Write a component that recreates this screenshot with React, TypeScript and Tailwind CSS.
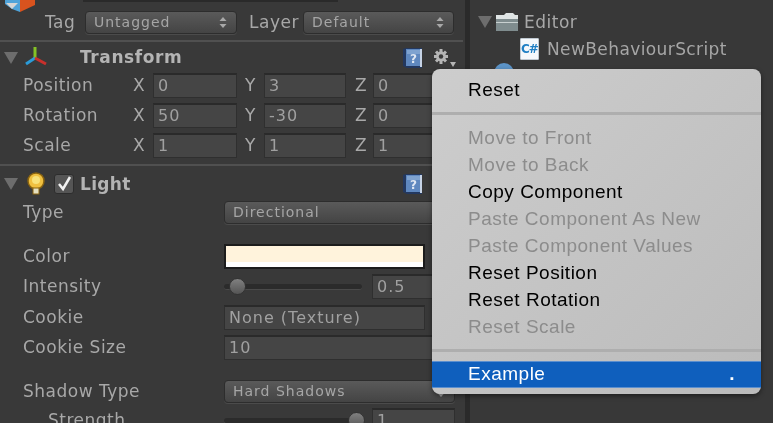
import React from "react";

const label = "text-[#a8a8a8] text-[17px] leading-none tracking-[0.5px]";

function Field({ w, children, className = "" }: { w: string; children?: React.ReactNode; className?: string }) {
  return (
    <div className={`${w} h-[25px] shrink-0 bg-[#454545] border border-[#2f2f2f] border-t-2 border-t-[#2a2a2a] border-b-[#2f2f2f] flex items-center pl-[4px] text-[#a0a0a0] text-[16px] tracking-[1px] ${className}`}>
      {children}
    </div>
  );
}

function Arrows() {
  return (
    <svg width="8" height="13" viewBox="0 0 8 13" className="shrink-0">
      <path d="M4 1 L7.5 5 H0.5 Z M4 12 L7.5 8 H0.5 Z" fill="#a8a8a8" />
    </svg>
  );
}

function Drop({ w, text, className = "" }: { w: string; text: string; className?: string }) {
  return (
    <div className={`${w} h-[23px] shrink-0 rounded-[4px] bg-gradient-to-b from-[#5a5a5a] to-[#444444] border border-[#2d2d2d] shadow-[0_1px_0_#4b4b4b] flex items-center justify-between pl-[8px] pr-[9px] text-[#a6a6a6] text-[14px] tracking-[1px] ${className}`}>
      <span>{text}</span>
      <Arrows />
    </div>
  );
}

function Tri() {
  return (
    <svg width="16" height="14" viewBox="0 0 16 14" className="shrink-0">
      <path d="M1 1 H15 L8 13 Z" fill="#6d6d6d" />
    </svg>
  );
}

function HelpBook() {
  return (
    <svg width="22" height="22" viewBox="0 0 22 22" className="shrink-0">
      <path d="M1 2 L4 1 H20 V21 H5 L1 19 Z" fill="#23385f" />
      <rect x="4" y="2" width="15" height="17" fill="#5f88bf" />
      <rect x="5" y="3" width="13" height="4" fill="#7fa3d0" />
      <rect x="18" y="2" width="2" height="18" fill="#c6d3e6" />
      <text x="11.5" y="15.5" textAnchor="middle" fontSize="12" fontWeight="700" fontFamily="'DejaVu Sans', sans-serif" fill="#dfe7f2">?</text>
    </svg>
  );
}

function Gear() {
  return (
    <svg width="24" height="20" viewBox="0 0 24 20" className="shrink-0">
      <g stroke="#b5b5b5" strokeWidth="3">
        <path d="M9 1 V16 M2 8.5 H16 M4 3.5 L14 13.5 M14 3.5 L4 13.5" />
      </g>
      <circle cx="9" cy="8.5" r="5" fill="#b5b5b5" />
      <circle cx="9" cy="8.5" r="2.2" fill="#3a3a3a" />
      <path d="M18 14 H24 L21 19 Z" fill="#b5b5b5" />
    </svg>
  );
}

function XYZ({ mt, x, y, z, name }: { mt: string; x: string; y: string; z: string; name: string }) {
  return (
    <div className={`flex items-center h-[25px] ${mt}`}>
      <span className={`${label} w-[110px] shrink-0`}>{name}</span>
      <span className={`${label} w-[20px] shrink-0`}>X</span>
      <Field w="w-[84px]">{x}</Field>
      <span className={`${label} ml-[8px] w-[19px] shrink-0`}>Y</span>
      <Field w="w-[82px]">{y}</Field>
      <span className={`${label} ml-[9px] w-[18px] shrink-0`}>Z</span>
      <Field w="w-[82px]">{z}</Field>
    </div>
  );
}

function Prop({ name, children, mt, indent }: { name: string; children?: React.ReactNode; mt: string; indent?: boolean }) {
  return (
    <div className={`flex items-center h-[25px] ${mt}`}>
      <span className={`${label} ${indent ? "pl-[25px]" : ""} w-[201px] shrink-0`}>{name}</span>
      {children}
    </div>
  );
}

function Slider({ thumb, w }: { thumb: number; w: string }) {
  return (
    <div className={`${w} h-[25px] relative flex items-center shrink-0`}>
      <div className="w-full h-[6px] rounded-full bg-[#2b2b2b] border-b border-[#4a4a4a]" />
      <div className="absolute w-[17px] h-[17px] rounded-full bg-gradient-to-b from-[#808080] to-[#555555] border border-[#333333]" style={{ left: thumb }} />
    </div>
  );
}

function MenuItem({ text, on }: { text: string; on?: boolean }) {
  return (
    <div className={`h-[27px] flex items-center pl-[36px] text-[19px] tracking-[0.5px] ${on ? "text-black" : "text-[#8c8c8c]"}`}>
      {text}
    </div>
  );
}

export default function App() {
  return (
    <div className="w-[773px] h-[423px] overflow-hidden relative flex bg-[#393939] font-['DejaVu_Sans',sans-serif] blur-[0.4px]">
      {/* Inspector */}
      <div className="w-[465px] shrink-0 pl-[23px] relative">
        <div className="absolute left-[4px] top-[-6px]">
          <svg width="32" height="21" viewBox="0 0 32 21">
            <path d="M1 0 H16 V18 L8 15 L1 10 Z" fill="#4fa3d9" />
            <path d="M16 0 H31 V11 L16 18 Z" fill="#d9531e" />
            <path d="M2 9 H14 L8 15 Z" fill="#d5d5d5" />
          </svg>
        </div>
        <div className="flex h-[2px] ml-[60px] w-[255px] bg-[#2a2a2a]" />
        <div className="flex items-center h-[23px] pl-[22px] mt-[9px]">
          <span className={`${label} w-[40px] shrink-0`}>Tag</span>
          <Drop w="w-[152px]" text="Untagged" />
          <span className={`${label} ml-[12px] w-[54px] shrink-0`}>Layer</span>
          <Drop w="w-[151px]" text="Default" />
        </div>
        <div className="h-[2px] bg-[#505050] -ml-[23px] mt-[6px] w-[463px]" />

        <div className="flex items-center h-[31px] -ml-[20px]">
          <Tri />
          <svg width="24" height="24" viewBox="0 0 24 24" className="ml-[5px] shrink-0">
            <path d="M11 12 V1" stroke="#84c225" strokeWidth="3" />
            <path d="M11 12 L2 18" stroke="#2a9bd8" strokeWidth="3" />
            <path d="M11 12 L22 18" stroke="#c9302c" strokeWidth="3" />
          </svg>
          <span className="ml-[32px] text-[#b4b4b4] text-[17px] font-bold tracking-[0.6px] leading-none">Transform</span>
          <div className="ml-auto mr-[9px] flex items-center gap-[8px]">
            <HelpBook />
            <Gear />
          </div>
        </div>

        <XYZ mt="mt-0" name="Position" x="0" y="3" z="0" />
        <XYZ mt="mt-[5px]" name="Rotation" x="50" y="-30" z="0" />
        <XYZ mt="mt-[5px]" name="Scale" x="1" y="1" z="1" />

        <div className="h-[2px] bg-[#505050] -ml-[23px] mt-[6px] w-[463px]" />

        <div className="flex items-center h-[36px] -ml-[20px]">
          <Tri />
          <svg width="24" height="26" viewBox="0 0 24 26" className="ml-[5px] shrink-0">
            <circle cx="12" cy="10" r="8" fill="#f0c040" stroke="#8a6410" strokeWidth="1.5" />
            <circle cx="12" cy="9" r="4" fill="#f8e27a" />
            <rect x="9" y="17" width="6" height="6" fill="#e5e0c0" stroke="#8a6410" />
          </svg>
          <div className="ml-[6px] w-[20px] h-[20px] rounded-[3px] bg-[#555555] border border-[#2d2d2d] flex items-center justify-center shrink-0">
            <svg width="16" height="16" viewBox="0 0 16 16"><path d="M3 8 L7 13 L14 1" fill="none" stroke="#f2f2f2" strokeWidth="2.5" /></svg>
          </div>
          <span className="ml-[6px] text-[#b4b4b4] text-[17px] font-bold tracking-[0.3px] leading-none">Light</span>
          <div className="ml-auto mr-[41px] flex"><HelpBook /></div>
        </div>

        <Prop name="Type" mt="-mt-[2px]"><Drop w="w-[231px]" text="Directional" /></Prop>
        <Prop name="Color" mt="mt-[19px]">
          <div className="w-[201px] h-[25px] shrink-0 border-2 border-[#1c1c1c] bg-[#fff3dc] flex flex-col justify-end">
            <div className="h-[5px] bg-white" />
          </div>
        </Prop>
        <Prop name="Intensity" mt="mt-[5px]">
          <Slider w="w-[138px]" thumb={5} />
          <Field w="w-[83px]" className="ml-[10px]">0.5</Field>
        </Prop>
        <Prop name="Cookie" mt="mt-[6px]"><Field w="w-[201px]">None (Texture)</Field></Prop>
        <Prop name="Cookie Size" mt="mt-[5px]"><Field w="w-[231px]">10</Field></Prop>
        <Prop name="Shadow Type" mt="mt-[19px]"><Drop w="w-[231px]" text="Hard Shadows" /></Prop>
        <Prop name="Strength" indent mt="mt-[4px]">
          <Slider w="w-[138px]" thumb={124} />
          <Field w="w-[83px]" className="ml-[10px]">1</Field>
        </Prop>
      </div>

      {/* Divider */}
      <div className="w-[5px] shrink-0 bg-[#2a2a2a]" />

      {/* Project tree */}
      <div className="flex-1 pt-[10px] pl-[7px] bg-[#383838] relative">
        <div className="flex items-center h-[24px] gap-[3px]">
          <Tri />
          <svg width="22" height="20" viewBox="0 0 22 20" className="shrink-0">
            <path d="M0 3 H8 L10 1 H17 L19 3 H22 V19 H0 Z" fill="#dfe4e4" />
            <rect x="0" y="7" width="22" height="12" fill="#7f8c8e" />
            <rect x="0" y="10" width="22" height="1" fill="#c8d0d0" />
          </svg>
          <span className={`${label} ml-[3px]`}>Editor</span>
        </div>
        <div className="flex items-center h-[24px] mt-[3px] pl-[43px] gap-[8px]">
          <div className="w-[19px] h-[22px] bg-[#f5f8fb] border border-[#bfc8d0] rounded-[1px] flex items-center justify-center text-[#1f7fc4] text-[12px] font-bold leading-none tracking-[-1px] shrink-0">C#</div>
          <span className="text-[#a6a6a6] text-[17px] leading-none tracking-[0.4px]">NewBehaviourScript</span>
        </div>
        <div className="absolute left-[24px] top-[63px] w-[20px] h-[20px] rounded-full bg-[#5c94c8]" />
      </div>

      {/* Context menu */}
      <div className="absolute left-[432px] top-[69px] w-[329px] h-[325px] rounded-[8px] overflow-hidden bg-gradient-to-br from-[#cdcdcd] to-[#bbbbbb] shadow-[0_2px_5px_rgba(0,0,0,0.45)] pt-[8px] font-['Liberation_Sans',sans-serif]">
        <MenuItem text="Reset" on />
        <div className="h-[3px] bg-[#aeaeae] mt-[8px]" />
        <div className="h-[10px]" />
        <MenuItem text="Move to Front" />
        <MenuItem text="Move to Back" />
        <MenuItem text="Copy Component" on />
        <MenuItem text="Paste Component As New" />
        <MenuItem text="Paste Component Values" />
        <MenuItem text="Reset Position" on />
        <MenuItem text="Reset Rotation" on />
        <MenuItem text="Reset Scale" />
        <div className="h-[3px] bg-[#aeaeae] mt-[8px]" />
        <div className="h-[9px]" />
        <div className="h-[27px] bg-[#0f5fbd] border-t border-[#5b8fcf] border-b border-b-[#5b8fcf] flex items-center justify-between pl-[36px] pr-[26px] text-white text-[19px] tracking-[0.5px]">
          <span>Example</span>
          <span className="font-bold">.</span>
        </div>
      </div>
    </div>
  );
}
